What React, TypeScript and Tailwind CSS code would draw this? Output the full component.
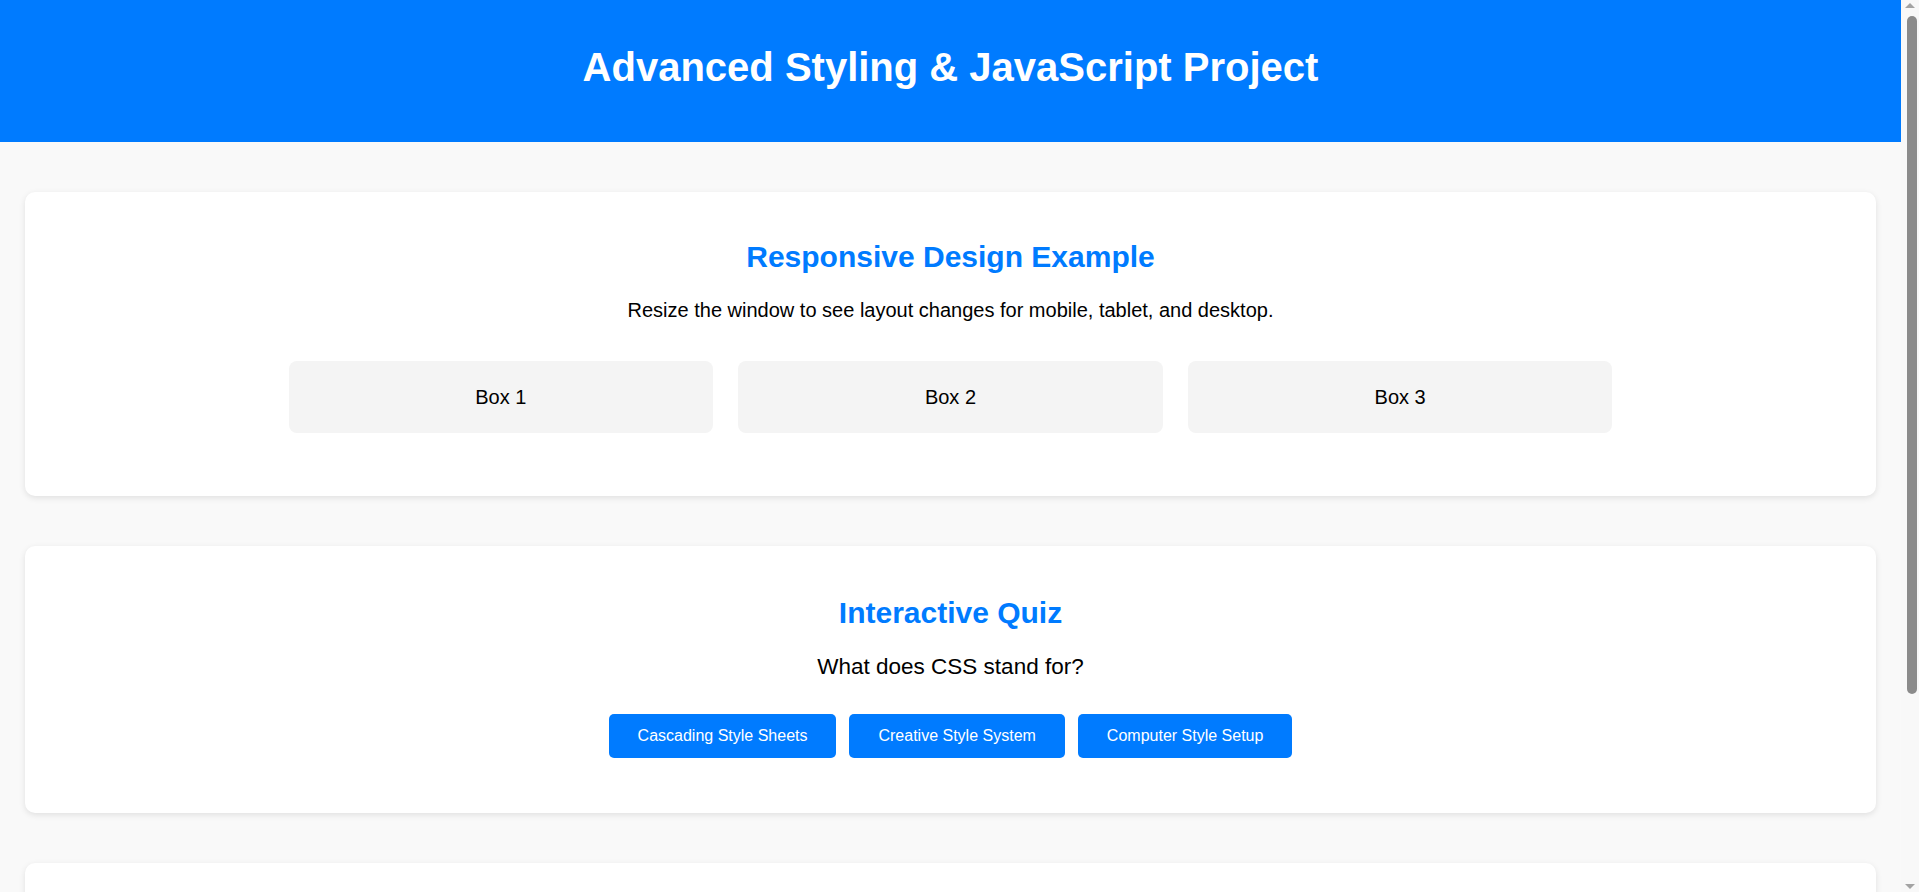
import { useState } from 'react';

const boxes = ['Box 1', 'Box 2', 'Box 3'];
const answers = ['Cascading Style Sheets', 'Creative Style System', 'Computer Style Setup'];

// browser scrollbar as seen in the screenshot
function Scrollbar() {
  return (
    <div className="fixed top-0 right-0 h-screen w-[18px] bg-[#f8f8f8] flex flex-col items-center">
      <div className="mt-[3px] w-0 h-0 border-l-[5px] border-r-[5px] border-b-[5px] border-l-transparent border-r-transparent border-b-[#a3a3a3]" />
      <div className="mt-[8px] ml-[4px] w-[10px] h-[678px] rounded-full bg-[#8b8b8b]" />
      <div className="mt-auto mb-[3px] w-0 h-0 border-l-[5px] border-r-[5px] border-t-[5px] border-l-transparent border-r-transparent border-t-[#a3a3a3]" />
    </div>
  );
}

export default function App() {
  const [picked, setPicked] = useState<string | null>(null);

  return (
    <div className="min-h-screen bg-[#f9f9f9] text-black font-['Liberation_Sans',Arial,sans-serif] pr-[18px]">
      {/* Header */}
      <header className="h-[142px] bg-[#007bff] pt-[44px] text-center">
        <h1 className="text-[40px] leading-[46px] font-bold text-white">
          Advanced Styling &amp; JavaScript Project
        </h1>
      </header>

      <main className="px-[25px] pt-[50px] pb-[50px] flex flex-col gap-[50px]">
        {/* Responsive section */}
        <section className="bg-white rounded-[10px] shadow-[0_2px_6px_rgba(0,0,0,0.1)] pt-[47px] pb-[63px] text-center">
          <h2 className="text-[30px] leading-[36px] font-bold text-[#007bff]">Responsive Design Example</h2>
          <p className="mt-[23px] text-[20px] leading-[24px]">
            Resize the window to see layout changes for mobile, tablet, and desktop.
          </p>
          <div className="mt-[39px] mx-auto w-[1324px] grid grid-cols-3 gap-[25px]">
            {boxes.map((b) => (
              <div
                key={b}
                className="h-[72px] rounded-[8px] bg-[#f4f4f4] flex items-center justify-center text-[20px]"
              >
                {b}
              </div>
            ))}
          </div>
        </section>

        {/* Quiz section */}
        <section className="bg-white rounded-[10px] shadow-[0_2px_6px_rgba(0,0,0,0.1)] pt-[49px] pb-[55px] text-center">
          <h2 className="text-[30px] leading-[36px] font-bold text-[#007bff]">Interactive Quiz</h2>
          <p className="mt-[23px] text-[22.5px] leading-[26px]">What does CSS stand for?</p>
          <div className="mt-[34px] flex justify-center gap-[13px]">
            {answers.map((a) => (
              <button
                key={a}
                onClick={() => setPicked(a)}
                className="h-[44px] px-[29px] rounded-[5px] bg-[#007bff] text-white text-[16px] cursor-pointer"
              >
                {a}
              </button>
            ))}
          </div>
          {picked && (
            <p className="mt-4 text-[18px]">
              {picked === 'Cascading Style Sheets' ? 'Correct!' : 'Try again.'}
            </p>
          )}
        </section>

        {/* Third section, starts below the fold */}
        <section className="bg-white rounded-[10px] shadow-[0_2px_6px_rgba(0,0,0,0.1)] pt-[47px] pb-[55px] text-center">
          <h2 className="text-[30px] leading-[36px] font-bold text-[#007bff]">Dark Mode Toggle</h2>
          <p className="mt-[23px] text-[20px] leading-[24px]">Click the button to switch themes.</p>
          <button className="mt-[30px] h-[44px] px-[29px] rounded-[5px] bg-[#007bff] text-white text-[16px]">
            Toggle Dark Mode
          </button>
        </section>
      </main>

      <Scrollbar />
    </div>
  );
}
